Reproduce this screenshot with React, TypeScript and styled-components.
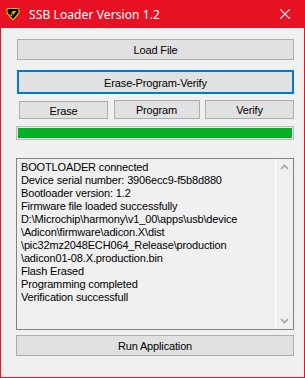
import styled, { createGlobalStyle } from 'styled-components';

const GlobalStyle = createGlobalStyle`
  html, body {
    margin: 0;
    padding: 0;
    background: #f0f0f0;
  }
`;

const Window = styled.div`
  width: 305px;
  height: 378px;
  box-sizing: border-box;
  border: 1px solid #e81123;
  background-color: #f0f0f0;
  display: flex;
  flex-direction: column;
  font-family: 'Liberation Sans', Arial, sans-serif;
  font-size: 11px;
  letter-spacing: -0.15px;
  color: #000;
`;

const TitleBar = styled.div`
  height: 28px;
  margin: -1px -1px 0;
  padding: 0 0 0 6px;
  background-color: #e81123;
  display: flex;
  align-items: center;
  color: #fff;
  font-family: 'Noto Sans', sans-serif;
  font-size: 12px;
  letter-spacing: 0.1px;
`;

const Title = styled.span`
  flex: 1;
  margin-left: 9px;
  padding-top: 1px;
`;

const CloseBox = styled.div`
  width: 46px;
  height: 28px;
  display: flex;
  align-items: center;
  justify-content: center;
  margin-right: -3px;
`;

const Content = styled.div`
  display: flex;
  flex-direction: column;
  padding: 11px 10px 0 15px;
`;

const Button = styled.div<{ $focused?: boolean; $height: number; $gap?: number; $inset?: number }>`
  height: ${(p) => p.$height}px;
  margin-top: ${(p) => p.$gap ?? 0}px;
  margin-left: ${(p) => p.$inset ?? 0}px;
  box-sizing: border-box;
  border: ${(p) => (p.$focused ? '2px solid #0078d7' : '1px solid #adadad')};
  background-color: #e1e1e1;
  display: flex;
  align-items: center;
  justify-content: center;
  padding-top: 1px;
`;

const ActionRow = styled.div`
  margin-top: 6px;
  padding-left: 3px;
  display: flex;
  align-items: flex-end;
  justify-content: space-between;
`;

const ActionButton = styled(Button)<{ $width: number }>`
  width: ${(p) => p.$width}px;
`;

const Progress = styled.div`
  margin-top: 7px;
  height: 14px;
  box-sizing: border-box;
  border: 1px solid #bcbcbc;
  background-color: #e6e6e6;
  padding: 1px;
`;

const ProgressFill = styled.div`
  height: 100%;
  background-color: #06b025;
`;

const LogBox = styled.div`
  margin-top: 18px;
  height: 172px;
  box-sizing: border-box;
  border: 1px solid #828282;
  display: flex;
`;

const LogText = styled.div`
  flex: 1;
  padding: 2px 4px;
  line-height: 13px;
  white-space: pre;
  overflow: hidden;
`;

const ScrollBar = styled.div`
  width: 17px;
  border-left: 1px solid #ffffff;
  display: flex;
  flex-direction: column;
  justify-content: space-between;
  align-items: center;
  padding: 5px 0 5px;
`;

const lines = [
  'BOOTLOADER connected',
  'Device serial number: 3906ecc9-f5b8d880',
  'Bootloader version: 1.2',
  'Firmware file loaded successfully',
  'D:\\Microchip\\harmony\\v1_00\\apps\\usb\\device',
  '\\Adicon\\firmware\\adicon.X\\dist',
  '\\pic32mz2048ECH064_Release\\production',
  '\\adicon01-08.X.production.bin',
  'Flash Erased',
  'Programming completed',
  'Verification successfull',
];

function AppIcon() {
  return (
    <svg width="14" height="14" viewBox="0 0 14 14">
      <path
        d="M2 1.5 H12 Q13 1.5 13 2.5 V6 L7.5 12.5 Q7 13 6.5 12.5 L1 6 V2.5 Q1 1.5 2 1.5 Z"
        fill="#000"
        stroke="#d8b400"
        strokeWidth="1.2"
      />
      <path d="M5 6 L7 4 H10 L9.5 5.5 H8.5 L8 7.5 H6.5 L6.8 6.5 Z" fill="#e6c200" />
      <path d="M4 7.5 H6.5 L6 9 H4.8 Z" fill="#e6c200" />
    </svg>
  );
}

function Chevron({ up }: { up?: boolean }) {
  return (
    <svg width="9" height="6" viewBox="0 0 9 6">
      <path
        d={up ? 'M1 5 L4.5 1.5 L8 5' : 'M1 1 L4.5 4.5 L8 1'}
        fill="none"
        stroke="#a3a3a3"
        strokeWidth="1.6"
      />
    </svg>
  );
}

export default function App() {
  return (
    <>
      <GlobalStyle />
      <Window>
        <TitleBar>
          <AppIcon />
          <Title>SSB Loader Version 1.2</Title>
          <CloseBox>
            <svg width="10" height="10" viewBox="0 0 10 10">
              <path d="M0 0 L10 10 M10 0 L0 10" stroke="#fff" strokeWidth="1.1" />
            </svg>
          </CloseBox>
        </TitleBar>
        <Content>
          <Button $height={21} $inset={1}>Load File</Button>
          <Button $height={24} $gap={10} $inset={1} $focused>
            Erase-Program-Verify
          </Button>
          <ActionRow>
            <ActionButton $height={18} $width={89}>Erase</ActionButton>
            <ActionButton $height={19} $width={86}>Program</ActionButton>
            <ActionButton $height={19} $width={89}>Verify</ActionButton>
          </ActionRow>
          <Progress>
            <ProgressFill style={{ width: '100%' }} />
          </Progress>
          <LogBox>
            <LogText>{lines.join('\n')}</LogText>
            <ScrollBar>
              <Chevron up />
              <Chevron />
            </ScrollBar>
          </LogBox>
          <Button $height={21} $gap={5}>Run Application</Button>
        </Content>
      </Window>
    </>
  );
}
